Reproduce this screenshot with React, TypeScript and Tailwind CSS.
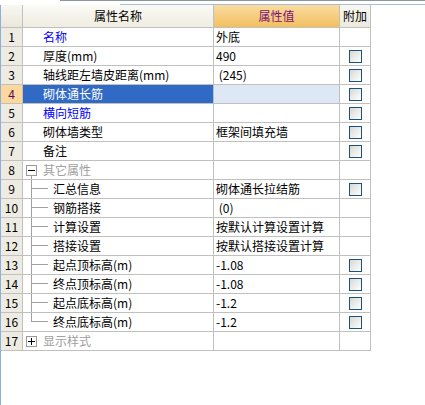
import React from 'react'

type Row = {
  n: number
  name: string
  value?: string
  check?: boolean
  blue?: boolean
  selected?: boolean
  kind?: 'top' | 'group' | 'child'
  open?: boolean
  last?: boolean
}

const ROWS: Row[] = [
  { n: 1, name: '名称', value: '外底', blue: true },
  { n: 2, name: '厚度(mm)', value: '490', check: true },
  { n: 3, name: '轴线距左墙皮距离(mm)', value: ' (245)', check: true },
  { n: 4, name: '砌体通长筋', value: '', check: true, selected: true },
  { n: 5, name: '横向短筋', value: '', check: true, blue: true },
  { n: 6, name: '砌体墙类型', value: '框架间填充墙', check: true },
  { n: 7, name: '备注', value: '', check: true },
  { n: 8, name: '其它属性', kind: 'group', open: true },
  { n: 9, name: '汇总信息', value: '砌体通长拉结筋', check: true, kind: 'child' },
  { n: 10, name: '钢筋搭接', value: ' (0)', kind: 'child' },
  { n: 11, name: '计算设置', value: '按默认计算设置计算', kind: 'child' },
  { n: 12, name: '搭接设置', value: '按默认搭接设置计算', kind: 'child' },
  { n: 13, name: '起点顶标高(m)', value: '-1.08', check: true, kind: 'child' },
  { n: 14, name: '终点顶标高(m)', value: '-1.08', check: true, kind: 'child' },
  { n: 15, name: '起点底标高(m)', value: '-1.2', check: true, kind: 'child' },
  { n: 16, name: '终点底标高(m)', value: '-1.2', check: true, kind: 'child', last: true },
  { n: 17, name: '显示样式', kind: 'group', open: false },
]

const COLS = 'grid grid-cols-[22px_191px_126px_31px]'
const CELL = 'border-r border-b border-[#c0c0c0]'

function CheckBox() {
  return <div className="w-[13px] h-[13px] border border-[#1c5180] bg-gradient-to-br from-[#d8d8d2] to-white" />
}

function TreeBox({ open }: { open: boolean }) {
  return (
    <div className="w-[11px] h-[11px] border border-[#9a9a9a] bg-white flex items-center justify-center relative">
      <div className="w-[7px] h-px bg-black" />
      {!open && <div className="absolute w-px h-[7px] bg-black" />}
    </div>
  )
}

function NameCell({ row }: { row: Row }) {
  const color = row.selected ? 'text-white' : row.blue ? 'text-[#0000ff]' : row.kind === 'group' ? 'text-[#a0a0a0]' : 'text-black'
  const bg = row.selected ? 'bg-[#316ac5]' : 'bg-white'

  if (row.kind === 'group') {
    return (
      <div className={`${CELL} ${bg} flex items-stretch`}>
        <div className="ml-[3px] w-[11px] flex flex-col items-center">
          <div className="h-[4px]" />
          <TreeBox open={!!row.open} />
          {row.open && <div className="flex-1 w-px bg-[#a0a0a0]" />}
        </div>
        <span className={`pl-[6px] self-center ${color}`}>{row.name}</span>
      </div>
    )
  }

  if (row.kind === 'child') {
    return (
      <div className={`${CELL} ${bg} flex items-stretch`}>
        <div className="w-[8px]" />
        <div className="w-[17px] flex flex-col">
          <div className="h-[9px] border-l border-b border-[#a0a0a0]" />
          <div className={`flex-1 border-[#a0a0a0] ${row.last ? '' : 'border-l'}`} />
        </div>
        <span className={`pl-[5px] self-center ${color}`}>{row.name}</span>
      </div>
    )
  }

  return (
    <div className={`${CELL} ${bg} flex items-center pl-[20px]`}>
      <span className={color}>{row.name}</span>
    </div>
  )
}

export default function App() {
  return (
    <div
      className="w-[425px] h-[405px] bg-white overflow-hidden text-[12px] leading-none"
      style={{ fontFamily: '"Noto Sans CJK SC", "Liberation Sans", sans-serif' }}
    >
      {/* window top edges */}
      <div className="h-px ml-[60px] bg-[#8a96a0]" />
      <div className="h-[3px]" />
      <div className="h-px ml-[120px] bg-[#a6bfd8]" />

      <div className="h-[400px] border-l border-[#8fb0d2]">
        {/* header */}
        <div className={`${COLS} h-[23px]`}>
          <div className={`${CELL} bg-gradient-to-b from-[#f8f7f1] to-[#ebe8da]`} />
          <div className={`${CELL} bg-gradient-to-b from-[#fbfaf5] to-[#efece0] flex items-center justify-center text-black`}>
            属性名称
          </div>
          <div className={`${CELL} bg-gradient-to-b from-[#fadc9f] to-[#f2bf5e] flex items-center justify-center text-[#7a1077]`}>
            属性值
          </div>
          <div className={`${CELL} bg-gradient-to-b from-[#f9f8f2] to-[#ece9dc] flex items-center justify-center text-black`}>
            附加
          </div>
        </div>

        {ROWS.map((row) => (
          <div key={row.n} className={`${COLS} h-[19px]`}>
            <div
              className={`${CELL} flex items-center justify-center ${
                row.selected ? 'bg-[#fcd89c] text-[#5c0a5c]' : 'bg-[#eeece2] text-black'
              }`}
            >
              {row.n}
            </div>
            <NameCell row={row} />
            <div className={`${CELL} flex items-center pl-[2px] whitespace-pre ${row.selected ? 'bg-[#dde8f4]' : 'bg-white'} text-black`}>
              {row.value ?? ''}
            </div>
            <div className={`${CELL} bg-white flex items-center justify-center`}>
              {row.check && <CheckBox />}
            </div>
          </div>
        ))}
      </div>
    </div>
  )
}
